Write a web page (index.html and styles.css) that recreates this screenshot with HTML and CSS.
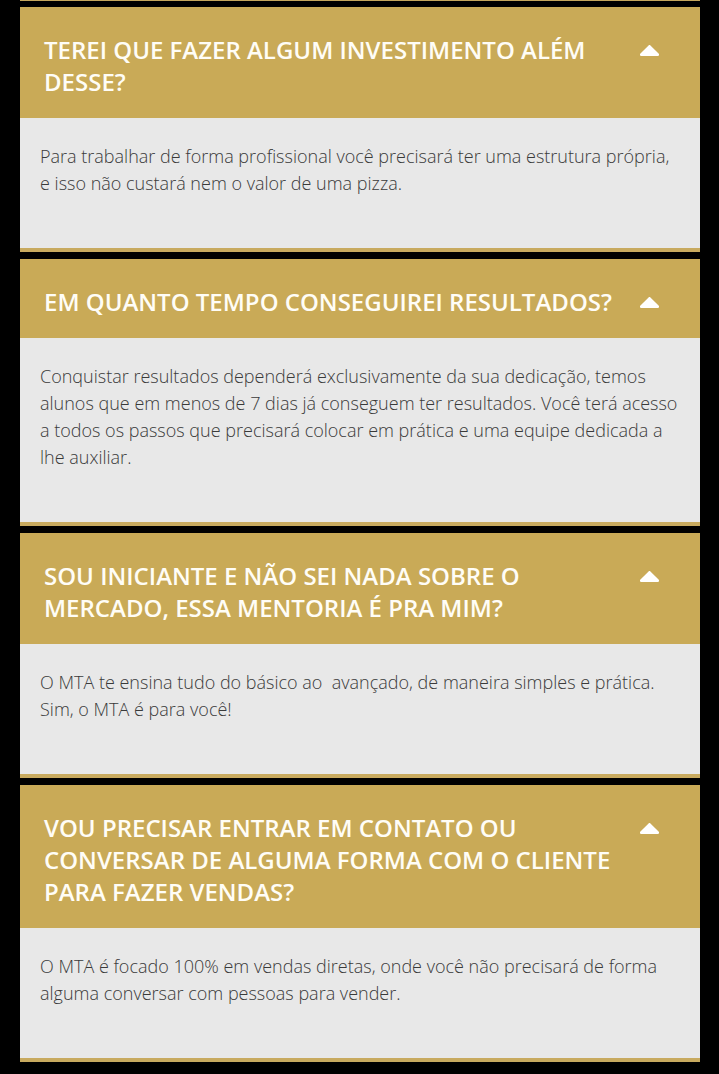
FILE: index.html
```html
<!DOCTYPE html>
<html lang="pt-BR">
<head>
<meta charset="utf-8">
<title>FAQ</title>
<link rel="stylesheet" href="styles.css">
</head>
<body>
<div class="faq">
  <div class="tail"></div>

  <div class="item">
    <div class="head">
      <h3 class="title">TEREI QUE FAZER ALGUM INVESTIMENTO ALÉM DESSE?</h3>
      <svg class="caret" viewBox="17 163 286 169" width="19" height="11"><path d="M288.662 331.644H31.338c-17.818 0-26.741-21.543-14.142-34.142l128.662-128.662c7.81-7.81 20.474-7.81 28.284 0l128.662 128.662c12.6 12.599 3.676 34.142-14.142 34.142z"/></svg>
    </div>
    <div class="body"><p>Para trabalhar de forma profissional você precisará ter uma estrutura própria, e isso não custará nem o valor de uma pizza.</p></div>
  </div>

  <div class="item">
    <div class="head">
      <h3 class="title">EM QUANTO TEMPO CONSEGUIREI RESULTADOS?</h3>
      <svg class="caret" viewBox="17 163 286 169" width="19" height="11"><path d="M288.662 331.644H31.338c-17.818 0-26.741-21.543-14.142-34.142l128.662-128.662c7.81-7.81 20.474-7.81 28.284 0l128.662 128.662c12.6 12.599 3.676 34.142-14.142 34.142z"/></svg>
    </div>
    <div class="body"><p>Conquistar resultados dependerá exclusivamente da sua dedicação, temos alunos que em menos de 7 dias já conseguem ter resultados. Você terá acesso a todos os passos que precisará colocar em prática e uma equipe dedicada a lhe auxiliar.</p></div>
  </div>

  <div class="item">
    <div class="head">
      <h3 class="title">SOU INICIANTE E NÃO SEI NADA SOBRE O MERCADO, ESSA MENTORIA É PRA MIM?</h3>
      <svg class="caret" viewBox="17 163 286 169" width="19" height="11"><path d="M288.662 331.644H31.338c-17.818 0-26.741-21.543-14.142-34.142l128.662-128.662c7.81-7.81 20.474-7.81 28.284 0l128.662 128.662c12.6 12.599 3.676 34.142-14.142 34.142z"/></svg>
    </div>
    <div class="body"><p>O MTA te ensina tudo do básico ao&nbsp; avançado, de maneira simples e prática. Sim, o MTA é para você!</p></div>
  </div>

  <div class="item">
    <div class="head">
      <h3 class="title">VOU PRECISAR ENTRAR EM CONTATO OU CONVERSAR DE ALGUMA FORMA COM O CLIENTE PARA FAZER VENDAS?</h3>
      <svg class="caret" viewBox="17 163 286 169" width="19" height="11"><path d="M288.662 331.644H31.338c-17.818 0-26.741-21.543-14.142-34.142l128.662-128.662c7.81-7.81 20.474-7.81 28.284 0l128.662 128.662c12.6 12.599 3.676 34.142-14.142 34.142z"/></svg>
    </div>
    <div class="body"><p>O MTA é focado 100% em vendas diretas, onde você não precisará de forma alguma conversar com pessoas para vender.</p></div>
  </div>
</div>
</body>
</html>
```

FILE: styles.css
```css
html, body {
  margin: 0;
  padding: 0;
  background: #000;
}

body {
  font-family: "Open Sans", "Noto Sans", sans-serif;
}

.faq {
  display: flex;
  flex-direction: column;
  gap: 7px;
  padding: 0 19px 0 20px;
}

.tail {
  height: 1px;
  margin-bottom: -1px;
  background: #c6a75c;
}

.item {
  display: flex;
  flex-direction: column;
  border-bottom: 4px solid #c8aa5f;
}

.head {
  display: flex;
  align-items: flex-start;
  gap: 15px;
  background: #c9aa57;
  padding: 27px 41px 20px 24px;
}

.title {
  flex: 1;
  margin: 0;
  color: #fffdf6;
  font-size: 24px;
  font-weight: 600;
  line-height: 32px;
}

.caret {
  flex: none;
  margin-top: 11px;
  fill: #fff;
}

.body {
  background: #e8e8e8;
  padding: 25px 20px 51px 20px;
}

.body p {
  margin: 0;
  color: #3a3a3a;
  font-size: 18px;
  font-weight: 300;
  line-height: 27px;
}
```
